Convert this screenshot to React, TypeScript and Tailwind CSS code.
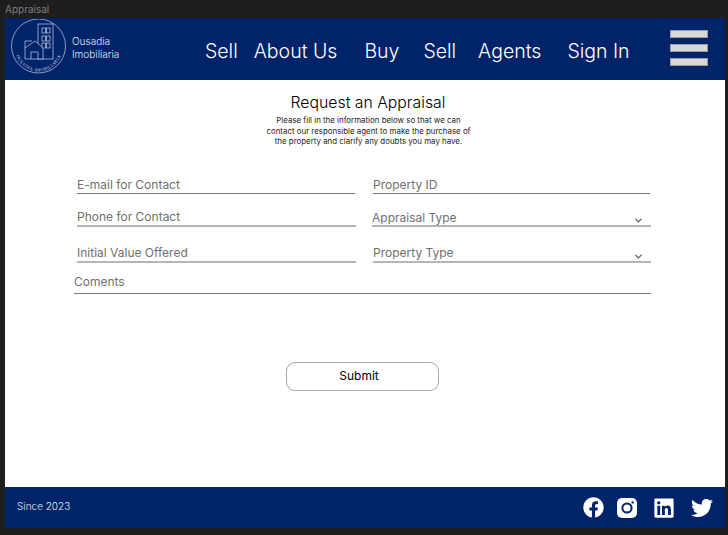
import React from 'react'
import { FaFacebook, FaLinkedin, FaTwitter } from 'react-icons/fa'
import { LuChevronDown } from 'react-icons/lu'

function Logo() {
  return (
    <svg width="55" height="55" viewBox="0 0 55 55" fill="none" stroke="#c8d1e6" strokeWidth="0.7" className="shrink-0">
      <circle cx="27.5" cy="27" r="27" />
      <rect x="27" y="5" width="15" height="35" />
      <rect x="31" y="9" width="3.6" height="5" />
      <rect x="35.4" y="9" width="3.6" height="5" />
      <rect x="31" y="17" width="3.6" height="5" />
      <rect x="35.4" y="17" width="3.6" height="5" />
      <rect x="31" y="24" width="3.6" height="5" />
      <rect x="35.4" y="24" width="3.6" height="5" />
      <path d="M14 40V29L24 22L32 29V40H14Z" fill="#00236a" />
      <path d="M14 29V22H21" />
      <path d="M20 40V33H27V40" />
      <path id="logoArc" d="M4 29A23.5 23.5 0 0 0 51 29" stroke="none" />
      <text fontSize="4.6" fill="#c8d1e6" stroke="none" fontFamily="Liberation Serif, serif" letterSpacing="0.4">
        <textPath href="#logoArc" startOffset="50%" textAnchor="middle">OUSADIA IMOBILIARIA</textPath>
      </text>
    </svg>
  )
}

function InstagramIcon() {
  return (
    <svg width="20" height="20" viewBox="0 0 20 20" className="ml-[13px]">
      <rect width="20" height="20" rx="5" fill="white" />
      <circle cx="10" cy="10" r="4.6" fill="white" stroke="#00236a" strokeWidth="2" />
      <circle cx="15.6" cy="4.4" r="1.2" fill="#00236a" />
    </svg>
  )
}

function Field({ label, className, select }: { label: string; className: string; select?: boolean }) {
  return (
    <div className={`flex items-end justify-between text-[12px] leading-[16px] text-[#6f6f6f] ${className}`}>
      <span>{label}</span>
      {select && <LuChevronDown className="mr-[7px] mb-[-1.5px] text-[#555555]" size={11} strokeWidth={2.5} />}
    </div>
  )
}

function App() {
  return (
    <div className="flex h-[535px] w-[728px] flex-col overflow-hidden bg-[#1e1e1e] pl-[5px] pr-[3px] font-['Inter',sans-serif]">
      <div className="h-[18px] text-[10px] leading-[18px] text-[#7d7d7d]">Appraisal</div>

      <header className="flex h-[62px] items-center whitespace-nowrap bg-[#00236a] text-white">
        <div className="ml-[6px] flex items-center">
          <div className="mb-[6px]">
            <Logo />
          </div>
          <div className="mb-[3px] ml-[6px] w-[48px] text-[10px] font-light leading-[13px] text-[#e6eaf3]">
            <div>Ousadia</div>
            <div>Imobiliaria</div>
          </div>
        </div>
        <nav className="ml-[85px] mt-[3px] flex items-center text-[19.5px] font-[350] leading-[24px]">
          <span>Sell</span>
          <span className="ml-[16px]">About Us</span>
          <span className="ml-[27px]">Buy</span>
          <span className="ml-[24px]">Sell</span>
          <span className="ml-[22px]">Agents</span>
          <span className="ml-[26px]">Sign In</span>
        </nav>
        <div className="mb-[2px] ml-auto mr-[17px] flex w-[38px] flex-col gap-[6px]">
          <div className="h-[8px] border border-[#9a9a9a] bg-[#d9d9d9]" />
          <div className="h-[8px] border border-[#9a9a9a] bg-[#d9d9d9]" />
          <div className="h-[8px] border border-[#9a9a9a] bg-[#d9d9d9]" />
        </div>
      </header>

      <main className="flex h-[407px] flex-col bg-white">
        <div className="ml-[5px] mt-[13px] flex flex-col items-center">
          <h1 className="ml-[1px] text-[15.8px] font-light leading-[20px] text-black">Request an Appraisal</h1>
          <p className="ml-[2px] mt-[2px] text-center text-[7.9px] leading-[10.5px] text-[#222222]">
            Please fill in the information below so that we can<br />
            contact our responsible agent to make the purchase of<br />
            the property and clarify any doubts you may have.
          </p>
        </div>

        <div className="ml-[72px] mt-[30px] flex">
          <Field label="E-mail for Contact" className="w-[278px] border-b border-[#777777]" />
          <Field label="Property ID" className="ml-[18px] w-[277px] border-b border-[#777777]" />
        </div>
        <div className="ml-[72px] mt-[15px] flex">
          <Field label="Phone for Contact" className="w-[279px] border-b-2 border-[#b5b5b5]" />
          <Field label="Appraisal Type" select className="ml-[16px] w-[279px] border-b-2 border-[#b5b5b5] [&>span]:mb-[-1px]" />
        </div>
        <div className="ml-[72px] mt-[18px] flex">
          <Field label="Initial Value Offered" className="w-[279px] border-b-2 border-[#b5b5b5]" />
          <Field label="Property Type" select className="ml-[17px] w-[278px] border-b-2 border-[#b5b5b5]" />
        </div>
        <Field label="Coments" className="ml-[69px] mt-[11px] w-[577px] border-b border-[#777777] pb-[3px]" />

        <button className="ml-[281px] mt-[68px] h-[29px] w-[153px] rounded-[9px] border border-[#a8a8a8] text-[12px] text-black">
          <span className="mr-[7px]">Submit</span>
        </button>
      </main>

      <footer className="flex h-[41px] items-center bg-[#00236a] text-white">
        <span className="mb-[2px] ml-[12px] text-[10px] font-light text-[#e6eaf3]">Since 2023</span>
        <div className="ml-auto mr-[12px] flex items-center">
          <FaFacebook size={21} />
          <InstagramIcon />
          <FaLinkedin size={22} className="ml-[16px]" />
          <FaTwitter size={22} className="ml-[16px]" />
        </div>
      </footer>
    </div>
  )
}

export default App
